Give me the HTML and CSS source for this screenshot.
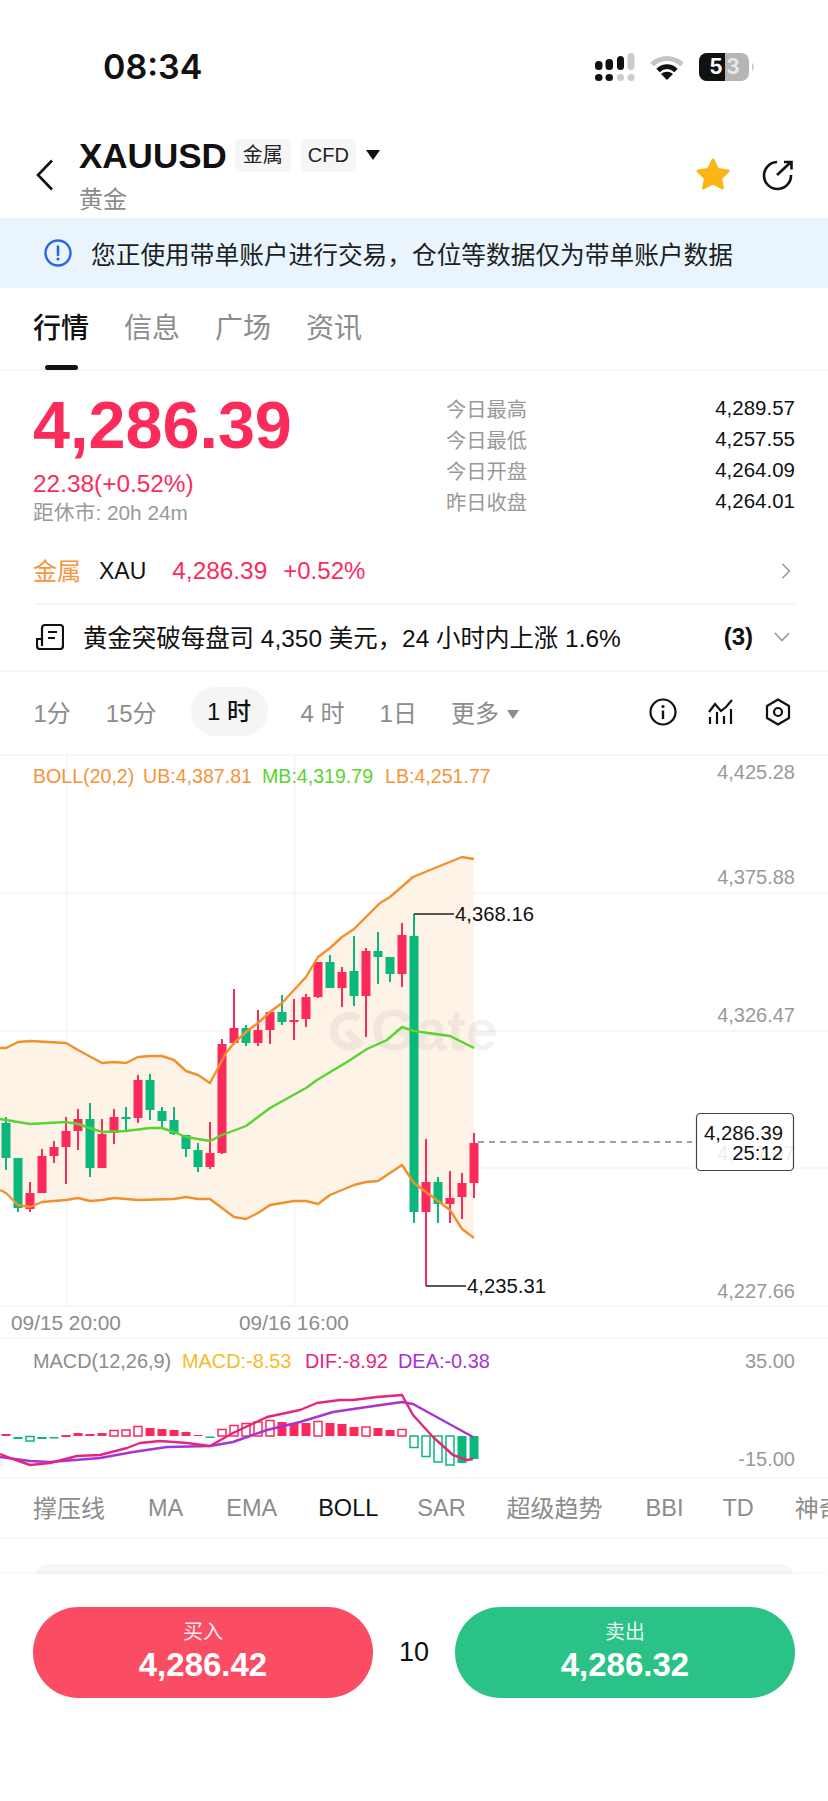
FILE: index.html
```html
<!DOCTYPE html>
<html lang="zh-CN">
<head>
   <meta charset="UTF-8">
   <meta name="viewport" content="width=device-width, initial-scale=1.0">
   <title>XAUUSD</title>
   <link rel="stylesheet" href="styles.css">
</head>

<body>
   <div class="status">
      <span class="time">08:34</span>
      <div class="status-icons">
         <svg width="40" height="28" viewBox="0 0 40 28">
            <rect x="0" y="8" width="7.500" height="9" rx="3.500" fill="#111"/>
            <rect x="10.500" y="6" width="7.500" height="11" rx="3.500" fill="#111"/>
            <rect x="22" y="3" width="7" height="14" rx="3.500" fill="#111"/>
            <rect x="32.500" y="0" width="7" height="17" rx="3.500" fill="#ccc"/>
            <rect x="0" y="21" width="7.500" height="7" rx="3.500" fill="#111"/>
            <rect x="10.500" y="21" width="7.500" height="7" rx="3.500" fill="#111"/>
            <rect x="22" y="21" width="7" height="7" rx="3.500" fill="#ccc"/>
            <rect x="32.500" y="21" width="7" height="7" rx="3.500" fill="#ccc"/>
         </svg>
         <svg width="34" height="25" viewBox="0 0 34 25">
            <path d="M2 9.500C10.500 1.500 23.500 1.500 32 9.500" fill="none" stroke="#c4c4c4" stroke-width="5"/>
            <path d="M8 15.500C13.500 10.500 20.500 10.500 26 15.500" fill="none" stroke="#111" stroke-width="5"/>
            <path d="M17 25L11 19C14.500 16 19.500 16 23 19Z" fill="#111"/>
         </svg>
         <svg width="56" height="28" viewBox="0 0 56 28">
            <rect x="0" y="0" width="50" height="28" rx="8" fill="#b5b5b5"/>
            <path d="M8 0H26V28H8A8 8 0 0 1 0 20V8A8 8 0 0 1 8 0Z" fill="#111"/>
            <path d="M53 10C55 11 55 17 53 18Z" fill="#c4c4c4"/>
            <text class="batt" x="17" y="21" fill="#fff">5</text>
            <text class="batt" x="34" y="21" fill="#e6e6e6">3</text>
         </svg>
      </div>
   </div>

   <header class="top">
      <svg class="back" width="18" height="32" viewBox="0 0 18 32">
         <path d="M16 1.500L2 16L16 30.500" fill="none" stroke="#111" stroke-width="2.600"/>
      </svg>
      <div class="title-box">
         <div class="title-row">
            <h1>XAUUSD</h1>
            <span class="tag tag-metal">金属</span>
            <span class="tag">CFD</span>
            <i class="caret"></i>
         </div>
         <div class="subtitle">黄金</div>
      </div>
      <svg class="star" width="36" height="34" viewBox="0 0 36 34">
         <path d="M18 3L22.500 12.500L33 14L25.500 21.500L27.500 31L18 26L8.500 31L10.500 21.500L3 14L13.500 12.500Z" fill="#fbb616" stroke="#fbb616" stroke-width="3" stroke-linejoin="round"/>
      </svg>
      <svg class="share" width="32" height="32" viewBox="0 0 32 32">
         <path d="M15 3A13.500 13.500 0 1 0 29 16" fill="none" stroke="#111" stroke-width="2.600"/>
         <path d="M15 16L29 3M22 3H29.500V10.500" fill="none" stroke="#111" stroke-width="2.600"/>
      </svg>
   </header>

   <div class="banner">
      <svg width="28" height="28" viewBox="0 0 28 28">
         <circle cx="14" cy="14" r="12.500" fill="none" stroke="#2468e8" stroke-width="2.400"/>
         <path d="M14 7.500V16" stroke="#2468e8" stroke-width="2.600" stroke-linecap="round"/>
         <circle cx="14" cy="20" r="1.600" fill="#2468e8"/>
      </svg>
      <span>您正使用带单账户进行交易，仓位等数据仅为带单账户数据</span>
   </div>

   <nav class="tabs">
      <a class="tab on">行情</a>
      <a class="tab">信息</a>
      <a class="tab">广场</a>
      <a class="tab">资讯</a>
   </nav>

   <section class="quote">
      <div>
         <div class="price">4,286.39</div>
         <div class="change">22.38(+0.52%)</div>
         <div class="closes">距休市: 20h 24m</div>
      </div>
      <dl class="stats">
         <dt>今日最高</dt><dd>4,289.57</dd>
         <dt>今日最低</dt><dd>4,257.55</dd>
         <dt>今日开盘</dt><dd>4,264.09</dd>
         <dt>昨日收盘</dt><dd>4,264.01</dd>
      </dl>
   </section>

   <div class="metal">
      <span class="metal-name">金属</span>
      <span class="metal-code">XAU</span>
      <span class="metal-price">4,286.39</span>
      <span class="metal-pct">+0.52%</span>
      <svg class="arrow-right" width="10" height="16" viewBox="0 0 10 16">
         <path d="M1.500 1L8.500 8L1.500 15" fill="none" stroke="#999" stroke-width="1.600"/>
      </svg>
   </div>

   <div class="news">
      <svg width="28" height="26" viewBox="0 0 28 26">
         <path d="M6 22V4A3 3 0 0 1 9 1H24A3 3 0 0 1 27 4V22A3 3 0 0 1 24 25H4A3 3 0 0 1 1 22V15H6" fill="none" stroke="#111" stroke-width="2.200"/>
         <path d="M12 8H21M12 14H19" stroke="#111" stroke-width="2.200"/>
      </svg>
      <span class="news-text">黄金突破每盘司 4,350 美元，24 小时内上涨 1.6%</span>
      <span class="news-count">(3)</span>
      <svg width="16" height="10" viewBox="0 0 16 10">
         <path d="M1 1L8 8.500L15 1" fill="none" stroke="#999" stroke-width="1.600"/>
      </svg>
   </div>

   <div class="periods">
      <a>1分</a>
      <a>15分</a>
      <a class="period-on">1 时</a>
      <a>4 时</a>
      <a>1日</a>
      <a class="period-more">更多<i class="caret caret-small"></i></a>
      <div class="tools">
         <svg width="28" height="28" viewBox="0 0 28 28">
            <circle cx="14" cy="14" r="12.500" fill="none" stroke="#111" stroke-width="2.200"/>
            <circle cx="14" cy="8.500" r="1.600" fill="#111"/>
            <path d="M14 12.500V21" stroke="#111" stroke-width="2.400"/>
         </svg>
         <svg width="26" height="26" viewBox="0 0 26 26">
            <path d="M1 13L7 5L13 12L18 8L24 1" fill="none" stroke="#111" stroke-width="2.200"/>
            <path d="M2 18V25M9 13V25M16 17V25M23 10V25" stroke="#111" stroke-width="2.200"/>
         </svg>
         <svg width="26" height="28" viewBox="0 0 26 28">
            <path d="M13 1.500L24 8V20L13 26.500L2 20V8Z" fill="none" stroke="#111" stroke-width="2.200" stroke-linejoin="round"/>
            <circle cx="13" cy="14" r="4" fill="none" stroke="#111" stroke-width="2.200"/>
         </svg>
      </div>
   </div>

   <svg class="chart" width="828" height="722" viewBox="0 755 828 722">
      <!-- grid -->
      <path d="M0 893H828M0 1031H828M0 1168H828M67 755V1306M295 755V1306" stroke="#f5f5f5" stroke-width="1.500" fill="none"/>
      <path d="M0 1306H828M0 1338H828" stroke="#f3f3f3" stroke-width="1.500" fill="none"/>

      <!-- boll band -->
      <polygon fill="#fdf3e7" points="0,1048 6,1048 18,1042 30,1041 66,1043 78,1050 102,1063 114,1062 126,1063 138,1057 150,1056 162,1056 174,1060 186,1071 198,1075 210,1083 226,1053 234,1043 246,1032 258,1023 270,1012 282,1003 294,990 306,977 318,957 330,948 342,937 354,929 366,917 380,903 390,897 413,877 430,870 462,857 474,859 474,1238 462,1229 450,1210 426,1192 414,1183 402,1165 378,1181 366,1182 354,1185 330,1195 318,1204 306,1201 294,1201 270,1205 258,1213 246,1219 234,1217 222,1208 210,1199 198,1199 186,1197 174,1199 138,1200 114,1198 102,1200 90,1201 78,1198 66,1200 42,1202 30,1207 18,1205 6,1193 0,1190"/>

      <!-- watermark -->
      <path d="M359 1019A15.500 15.500 0 1 0 359 1043L347 1031" fill="none" stroke="#000" stroke-opacity=".05" stroke-width="8"/>
      <text class="mark" x="371" y="1050">Gate</text>

      <!-- candles, red -->
      <g class="wick-red">
         <path d="M30 1182V1212M42 1149V1193M54 1141V1163M66 1117V1184M78 1109V1150M102 1119V1168M114 1109V1144M138 1075V1123M210 1122V1169M222 1039V1154M234 989V1045M258 1010V1046M270 1012V1044M294 999V1040M306 994V1027M318 962V998M342 967V1007M366 948V1037M402 923V987M426 1139V1286M450 1171V1223M462 1173V1219M474 1133V1198"/>
      </g>
      <g class="body-red">
         <rect x="25.500" y="1193" width="9" height="16"/>
         <rect x="37.500" y="1156" width="9" height="37"/>
         <rect x="49.500" y="1147" width="9" height="9"/>
         <rect x="61.500" y="1131" width="9" height="16"/>
         <rect x="73.500" y="1119" width="9" height="12"/>
         <rect x="97.500" y="1134" width="9" height="34"/>
         <rect x="109.500" y="1117" width="9" height="16"/>
         <rect x="133.500" y="1080" width="9" height="38"/>
         <rect x="205.500" y="1153" width="9" height="14"/>
         <rect x="217.500" y="1044" width="9" height="109"/>
         <rect x="229.500" y="1028" width="9" height="15"/>
         <rect x="253.500" y="1030" width="9" height="13"/>
         <rect x="265.500" y="1012" width="9" height="18"/>
         <rect x="289.500" y="1020" width="9" height="2"/>
         <rect x="301.500" y="997" width="9" height="22"/>
         <rect x="313.500" y="962" width="9" height="35"/>
         <rect x="337.500" y="972" width="9" height="16"/>
         <rect x="361.500" y="951" width="9" height="45"/>
         <rect x="397.500" y="935" width="9" height="39"/>
         <rect x="421.500" y="1182" width="9" height="30"/>
         <rect x="445.500" y="1198" width="9" height="6"/>
         <rect x="457.500" y="1183" width="9" height="14"/>
         <rect x="469.500" y="1143" width="9" height="40"/>
      </g>

      <!-- candles, green -->
      <g class="wick-green">
         <path d="M6 1117V1170M18 1158V1212M90 1103V1177M126 1107V1131M150 1074V1120M162 1107V1127M174 1107V1135M186 1135V1157M198 1143V1172M246 1025V1046M282 995V1025M330 955V988M354 936V1006M378 932V984M390 957V982M414 914V1223M438 1177V1223"/>
      </g>
      <g class="body-green">
         <rect x="1.500" y="1123" width="9" height="35"/>
         <rect x="13.500" y="1158" width="9" height="50"/>
         <rect x="85.500" y="1119" width="9" height="49"/>
         <rect x="121.500" y="1117" width="9" height="2"/>
         <rect x="145.500" y="1080" width="9" height="30"/>
         <rect x="157.500" y="1111" width="9" height="10"/>
         <rect x="169.500" y="1120" width="9" height="14"/>
         <rect x="181.500" y="1135" width="9" height="14"/>
         <rect x="193.500" y="1150" width="9" height="17"/>
         <rect x="241.500" y="1028" width="9" height="15"/>
         <rect x="277.500" y="1012" width="9" height="10"/>
         <rect x="325.500" y="962" width="9" height="26"/>
         <rect x="349.500" y="971" width="9" height="25"/>
         <rect x="373.500" y="951" width="9" height="6"/>
         <rect x="385.500" y="957" width="9" height="17"/>
         <rect x="409.500" y="936" width="9" height="276"/>
         <rect x="433.500" y="1182" width="9" height="22"/>
      </g>

      <!-- boll lines -->
      <polyline class="line-orange" points="0,1048 6,1048 18,1042 30,1041 66,1043 78,1050 102,1063 114,1062 126,1063 138,1057 150,1056 162,1056 174,1060 186,1071 198,1075 210,1083 226,1053 234,1043 246,1032 258,1023 270,1012 282,1003 294,990 306,977 318,957 330,948 342,937 354,929 366,917 380,903 390,897 413,877 430,870 462,857 474,859"/>
      <polyline class="line-green" points="0,1119 18,1122 30,1124 66,1122 78,1124 90,1128 102,1132 126,1131 150,1128 162,1128 174,1132 186,1137 210,1141 222,1135 246,1126 270,1108 306,1088 317,1080 347,1062 367,1049 387,1040 402,1027 414,1031 450,1036 474,1048"/>
      <polyline class="line-orange" points="0,1190 6,1193 18,1205 30,1207 42,1202 66,1200 78,1198 90,1201 102,1200 114,1198 138,1200 174,1199 186,1197 198,1199 210,1199 222,1208 234,1217 246,1219 258,1213 270,1205 294,1201 306,1201 318,1204 330,1195 354,1185 366,1182 378,1181 402,1165 414,1183 426,1192 450,1210 462,1229 474,1238"/>

      <!-- high and low marks -->
      <path d="M414 914H454M426 1286H466" stroke="#222" stroke-width="1.500" fill="none"/>
      <text class="mark-label" x="455" y="921">4,368.16</text>
      <text class="mark-label" x="467" y="1293">4,235.31</text>

      <!-- legend -->
      <text class="legend" y="783"><tspan x="33" fill="#f5943c">BOLL(20,2)</tspan><tspan x="143" fill="#f5943c">UB:4,387.81</tspan><tspan x="262" fill="#5ad62d">MB:4,319.79</tspan><tspan x="385" fill="#f5943c">LB:4,251.77</tspan></text>
      <text class="legend legend-macd" y="1368"><tspan x="33" fill="#8c8c8c">MACD(12,26,9)</tspan><tspan x="182" fill="#f7bb2c">MACD:-8.53</tspan><tspan x="305" fill="#e5267c">DIF:-8.92</tspan><tspan x="398" fill="#a733d6">DEA:-0.38</tspan></text>

      <!-- axis -->
      <text class="axis" x="795" y="779">4,425.28</text>
      <text class="axis" x="795" y="884">4,375.88</text>
      <text class="axis" x="795" y="1022">4,326.47</text>
      <text class="axis" x="795" y="1160">4,277.07</text>
      <text class="axis" x="795" y="1298">4,227.66</text>
      <text class="axis" x="795" y="1368">35.00</text>
      <text class="axis" x="795" y="1466">-15.00</text>
      <text class="time-label" x="11" y="1330">09/15 20:00</text>
      <text class="time-label" x="239" y="1330">09/16 16:00</text>

      <!-- last price -->
      <path d="M478 1142H692" stroke="#444" stroke-width="1.200" stroke-dasharray="6 5" fill="none"/>
      <rect x="696.500" y="1113.500" width="97" height="57" rx="4" fill="#fff" fill-opacity=".82" stroke="#444" stroke-width="1.200"/>
      <text class="last" x="783" y="1140">4,286.39</text>
      <text class="last" x="783" y="1160">25:12</text>

      <!-- macd bars -->
      <g class="bar-red">
         <rect x="1.500" y="1434" width="9" height="2"/>
         <rect x="61.500" y="1435" width="9" height="2"/>
         <rect x="73.500" y="1433" width="9" height="3"/>
         <rect x="85.500" y="1434" width="9" height="2"/>
         <rect x="97.500" y="1433" width="9" height="3"/>
         <rect x="145.500" y="1428" width="9" height="8"/>
         <rect x="157.500" y="1429" width="9" height="7"/>
         <rect x="169.500" y="1430" width="9" height="6"/>
         <rect x="181.500" y="1432" width="9" height="4"/>
         <rect x="193.500" y="1435" width="9" height="1"/>
         <rect x="277.500" y="1422" width="9" height="14"/>
         <rect x="289.500" y="1423" width="9" height="13"/>
         <rect x="301.500" y="1423" width="9" height="13"/>
         <rect x="325.500" y="1423" width="9" height="13"/>
         <rect x="337.500" y="1424" width="9" height="12"/>
         <rect x="349.500" y="1427" width="9" height="9"/>
         <rect x="373.500" y="1428" width="9" height="8"/>
         <rect x="385.500" y="1430" width="9" height="6"/>
      </g>
      <g class="bar-red-open">
         <rect x="110" y="1430.500" width="8" height="5.500"/>
         <rect x="122" y="1430" width="8" height="6"/>
         <rect x="134" y="1426.500" width="8" height="9.500"/>
         <rect x="218" y="1429.500" width="8" height="6.500"/>
         <rect x="230" y="1425.500" width="8" height="10.500"/>
         <rect x="242" y="1423.500" width="8" height="12.500"/>
         <rect x="254" y="1422" width="8" height="14"/>
         <rect x="266" y="1420.500" width="8" height="15.500"/>
         <rect x="314" y="1421.500" width="8" height="14.500"/>
         <rect x="362" y="1427" width="8" height="9"/>
         <rect x="398" y="1429.500" width="8" height="6.500"/>
      </g>
      <g class="bar-green">
         <rect x="13.500" y="1437" width="9" height="2"/>
         <rect x="37.500" y="1437" width="9" height="2"/>
         <rect x="49.500" y="1437" width="9" height="1.500"/>
         <rect x="205.500" y="1436.500" width="9" height="1.500"/>
         <rect x="457.500" y="1436" width="9" height="27"/>
         <rect x="469.500" y="1436" width="9" height="23"/>
      </g>
      <g class="bar-green-open">
         <rect x="26" y="1436.500" width="8" height="4.500"/>
         <rect x="410" y="1436" width="8" height="11.500"/>
         <rect x="422" y="1436" width="8" height="20.500"/>
         <rect x="434" y="1436" width="8" height="26"/>
         <rect x="446" y="1436" width="8" height="29"/>
      </g>

      <!-- macd lines -->
      <polyline class="line-dea" points="0,1457 30,1461 50,1462 100,1458 133,1452 167,1447 210,1446 233,1442 267,1430 300,1422 333,1412 367,1407 402,1402 413,1404 433,1415 473,1437"/>
      <polyline class="line-dif" points="0,1454 13,1459 30,1465 50,1463 77,1456 100,1455 127,1448 140,1443 160,1441 187,1443 210,1446 233,1433 267,1417 300,1410 317,1403 340,1400 353,1400 377,1397 402,1395 413,1415 433,1437 453,1455 467,1460 473,1459"/>
   </svg>

   <div class="indicators">
      <a class="cjk">撑压线</a>
      <a class="nudge-right">MA</a>
      <a class="nudge-right">EMA</a>
      <a class="ind-on">BOLL</a>
      <a class="nudge-left">SAR</a>
      <a class="cjk">超级趋势</a>
      <a class="nudge-right">BBI</a>
      <a class="nudge-left">TD</a>
      <a class="cjk">神奇九转</a>
   </div>

   <div class="peek">
      <div class="peek-card"></div>
   </div>

   <footer class="trade">
      <button class="buy">
         <span class="side">买入</span>
         <span class="amount">4,286.42</span>
      </button>
      <span class="spread">10</span>
      <button class="sell">
         <span class="side">卖出</span>
         <span class="amount">4,286.32</span>
      </button>
   </footer>
</body>
</html>
```

FILE: styles.css
```css
* {
   box-sizing: border-box;
   font-family: 'Liberation Sans', 'Noto Sans CJK SC', sans-serif;
}

html,
body {
   margin: 0;
   padding: 0;
   width: 828px;
   height: 1801px;
   overflow: hidden;
   background: white;
   color: #111;
}

/* status bar */
.status {
   height: 134px;
   display: flex;
   justify-content: space-between;
   padding: 53px 73px 0 103px;
}

.time {
   font-family: 'Inter', sans-serif;
   font-size: 34px;
   font-weight: 600;
   line-height: 28px;
}

.status-icons {
   display: flex;
   align-items: flex-start;
   gap: 15px;
}

.status-icons svg:nth-child(2) {
   margin-top: 2px;
}

.batt {
   font-family: 'Inter', sans-serif;
   font-size: 21px;
   font-weight: 700;
   text-anchor: middle;
}

/* header */
.top {
   height: 84px;
   display: flex;
   align-items: center;
   padding-left: 36px;
   padding-right: 34px;
}

.back {
   margin-right: 25px;
   margin-top: -2px;
}

.title-box {
   flex: 1;
   margin-top: 1px;
}

.title-row {
   display: flex;
   align-items: center;
   height: 33px;
}

h1 {
   margin: 0 8px 0 0;
   font-size: 35px;
   font-weight: 700;
   line-height: 33px;
}

.tag {
   height: 33px;
   width: 55px;
   margin-right: 9px;
   background: #f6f6f6;
   border-radius: 5px;
   font-size: 20px;
   line-height: 33px;
   text-align: center;
   color: #222;
}

.tag-metal {
   width: 56px;
   margin-right: 10px;
}

.caret {
   width: 0;
   height: 0;
   margin-left: 1px;
   border-left: 7.5px solid transparent;
   border-right: 7.5px solid transparent;
   border-top: 10px solid #111;
}

.subtitle {
   margin-top: 13px;
   font-size: 24px;
   line-height: 30px;
   color: #8c8c8c;
}

.star {
   margin-right: 31px;
   margin-top: -5px;
}

.share {
   margin-top: -3px;
}

/* banner */
.banner {
   height: 70px;
   display: flex;
   align-items: center;
   gap: 19px;
   padding-left: 44px;
   padding-bottom: 1px;
   background: #e9f4fd;
   font-size: 24.7px;
   color: #1b1f24;
   white-space: nowrap;
}

/* tabs */
.tabs {
   height: 83px;
   display: flex;
   gap: 35px;
   padding: 22px 33px 0;
   border-bottom: 2px solid #f6f6f6;
}

.tab {
   position: relative;
   font-size: 28px;
   line-height: 38px;
   color: #8c8c8c;
}

.tab.on {
   color: #111;
   font-weight: 500;
}

.tab.on::after {
   content: '';
   position: absolute;
   left: 12px;
   top: 55px;
   width: 33px;
   height: 5px;
   background: #111;
   border-radius: 3px;
}

/* quote */
.quote {
   height: 170px;
   display: flex;
   justify-content: space-between;
   padding: 16px 33px 0 33px;
}

.price {
   font-size: 66.500px;
   font-weight: 700;
   line-height: 76px;
   color: #fb2c5b;
}

.change {
   margin-top: 7px;
   font-size: 24.400px;
   line-height: 28px;
   color: #fb2c5b;
}

.closes {
   font-size: 20.800px;
   line-height: 29px;
   color: #999;
}

.stats {
   width: 349px;
   margin: 5px 0 0;
   display: grid;
   grid-template-columns: 1fr auto;
   grid-auto-rows: 31px;
   align-items: center;
   font-size: 20.500px;
}

.stats dt {
   font-size: 20.300px;
   color: #999;
}

.stats dd {
   margin: 0;
   color: #111;
}

/* metal row */
.metal {
   height: 64px;
   margin: 0 33px 0 34px;
   padding-bottom: 2px;
   display: flex;
   align-items: center;
   border-bottom: 2px solid #f6f6f6;
   font-size: 24px;
}

.metal-name {
   font-size: 24px;
   color: #f5943c;
   margin: -3px 18px 0 -1px;
}

.metal-code {
   font-size: 23px;
   margin-right: 26px;
}

.metal-price {
   color: #fb2c5b;
   font-size: 24.400px;
   margin-right: 16px;
}

.metal-pct {
   color: #fb2c5b;
   flex: 1;
}

.arrow-right {
   margin-right: 4px;
}

/* news row */
.news {
   height: 67px;
   display: flex;
   align-items: center;
   padding: 0 38px 2px 36px;
   border-bottom: 2px solid #f6f6f6;
}

.news-text {
   flex: 1;
   margin-left: 19px;
   font-size: 24.450px;
   white-space: nowrap;
}

.news-count {
   margin-right: 21px;
   font-size: 24px;
   font-weight: 700;
}

/* period selector */
.periods {
   height: 84px;
   display: flex;
   align-items: center;
   gap: 35px;
   padding: 0 37px 3px 33.500px;
   border-bottom: 2px solid #f6f6f6;
   font-size: 24px;
   color: #8c8c8c;
}

.period-on {
   height: 49px;
   width: 77px;
   margin: 0 -2px 0 -1px;
   background: #f5f5f5;
   border-radius: 25px;
   line-height: 49px;
   text-align: center;
   color: #111;
   font-weight: 500;
}

.period-more {
   margin-left: -1px;
}

.caret-small {
   display: inline-block;
   margin-left: 8px;
   vertical-align: 3px;
   border-left-width: 6.500px;
   border-right-width: 6.500px;
   border-top: 9px solid #8c8c8c;
}

.tools {
   margin-left: auto;
   display: flex;
   align-items: center;
   gap: 31px;
}

/* chart */
.chart {
   display: block;
   margin-top: -1px;
}

.legend {
   font-size: 19.600px;
}

.legend-macd {
   font-size: 19.900px;
}

.axis {
   font-size: 20px;
   fill: #999;
   text-anchor: end;
}

.time-label {
   font-size: 20.800px;
   fill: #8c8c8c;
}

.mark {
   font-size: 57px;
   font-weight: 700;
   fill: #000;
   fill-opacity: 0.05;
}

.mark-label {
   font-size: 20.300px;
   fill: #111;
}

.last {
   font-size: 20.300px;
   fill: #111;
   text-anchor: end;
}

.wick-red {
   stroke: #fa2a5a;
   stroke-width: 2;
   fill: none;
}

.wick-green {
   stroke: #0ab87c;
   stroke-width: 2;
   fill: none;
}

.body-red {
   fill: #fa2a5a;
}

.body-green {
   fill: #0ab87c;
}

.bar-red {
   fill: #fa2a5a;
}

.bar-green {
   fill: #0ab87c;
}

.bar-red-open {
   fill: white;
   stroke: #fa2a5a;
   stroke-width: 1.500;
}

.bar-green-open {
   fill: white;
   stroke: #0ab87c;
   stroke-width: 1.500;
}

polyline {
   fill: none;
   stroke-width: 2.400;
   stroke-linejoin: round;
}

.line-orange {
   stroke: #f2902c;
}

.line-green {
   stroke: #58d42f;
}

.line-dea {
   stroke: #a733d6;
}

.line-dif {
   stroke: #e5267c;
}

/* indicator tabs */
.indicators {
   height: 62px;
   display: flex;
   align-items: center;
   gap: 41px;
   padding-left: 33px;
   border-top: 2px solid #f6f6f6;
   border-bottom: 2px solid #f6f6f6;
   font-size: 23.500px;
   color: #8c8c8c;
   white-space: nowrap;
   overflow: hidden;
}

.indicators .cjk {
   font-size: 24px;
   margin-top: -3px;
}

.nudge-right {
   margin-left: 2px;
}

.nudge-left {
   margin-left: -2px;
}

.ind-on {
   color: #111;
}

/* bit of the next card, cut off by the footer */
.peek {
   height: 35px;
   padding: 25px 34px 0 34px;
   overflow: hidden;
}

.peek-card {
   height: 40px;
   background: #f5f6f8;
   border-radius: 14px;
}

/* buy and sell */
.trade {
   height: 227px;
   display: flex;
   align-items: flex-start;
   justify-content: space-between;
   padding: 33px 33px 0;
   background: white;
   box-shadow: 0 -1px 3px rgba(0, 0, 0, 0.04);
   position: relative;
}

button {
   width: 340px;
   height: 91px;
   border: none;
   border-radius: 46px;
   color: white;
   display: flex;
   flex-direction: column;
   align-items: center;
   padding: 11px 0 0;
}

.buy {
   background: #fa4c63;
}

.sell {
   background: #2bc287;
}

.side {
   font-size: 20px;
   line-height: 28px;
   opacity: 0.9;
}

.amount {
   font-size: 33px;
   font-weight: 700;
   line-height: 38px;
}

.spread {
   font-size: 27px;
   line-height: 91px;
}
```
